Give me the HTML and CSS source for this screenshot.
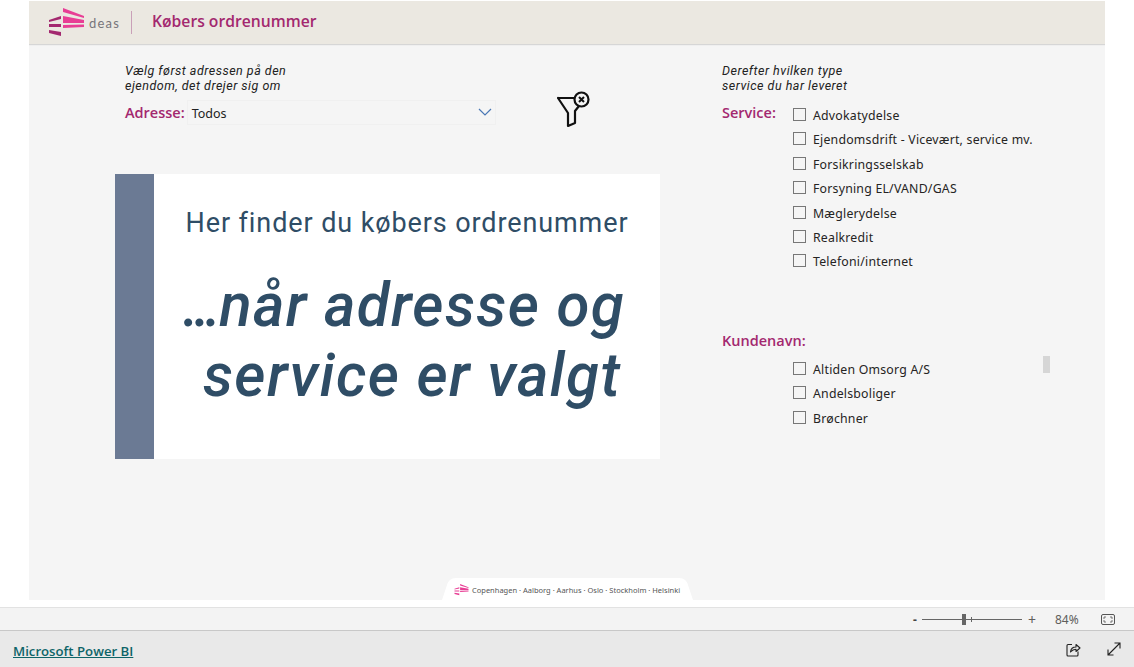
FILE: index.html
```html
<!DOCTYPE html>
<html lang="da">
<head>
<meta charset="utf-8">
<title>Købers ordrenummer</title>
<link rel="stylesheet" href="styles.css">
</head>
<body>
<main class="viewport">
  <section class="canvas">
    <header class="head">
      <svg class="logo" width="35" height="30" viewBox="0 0 35 30">
        <path fill="#e83e95" d="M14 0L35 8V10L14 4z M14 8L35 12V15H14z M14 17L35 16.500V19L14 20z"/>
        <path fill="#a3286f" d="M0 12L12 8V11L0 14z M0 16H12V19H0z M0 22L12 24V28L0 25z"/>
      </svg>
      <span class="brand">deas</span>
      <span class="divider"></span>
      <h1 class="title">Købers ordrenummer</h1>
    </header>
    <div class="body">
      <div class="left">
        <p class="note note-left">Vælg først adressen på den<br>ejendom, det drejer sig om</p>
        <div class="address-row">
          <span class="label">Adresse:</span>
          <div class="select">
            <span class="select-value">Todos</span>
            <svg width="14" height="8" viewBox="0 0 14 8"><path d="M1 1l6 6 6-6" fill="none" stroke="#4a78b5" stroke-width="1.200"/></svg>
          </div>
          <svg class="clear" width="34" height="38" viewBox="0 0 34 38">
            <path d="M1 8H17 M1 8L11 23V36L18 33V21L22 16" fill="none" stroke="#111" stroke-width="2.200" stroke-linejoin="round" stroke-linecap="round"/>
            <circle cx="24.500" cy="9.500" r="7" fill="#f5f5f5" stroke="#111" stroke-width="2.200"/>
            <path d="M22 7l5 5m0-5l-5 5" stroke="#111" stroke-width="2"/>
          </svg>
        </div>
        <div class="banner">
          <div class="stripe"></div>
          <div class="banner-text">
            <p class="b-small">Her finder du købers ordrenummer</p>
            <p class="b-big"><span class="dots">...</span>når adresse og<br>&nbsp;service er valgt</p>
          </div>
        </div>
      </div>
      <div class="right">
        <p class="note">Derefter hvilken type<br>service du har leveret</p>
        <div class="service">
          <span class="label">Service:</span>
          <ul class="checks">
            <li><i class="box"></i>Advokatydelse</li>
            <li><i class="box"></i>Ejendomsdrift - Vicevært, service mv.</li>
            <li><i class="box"></i>Forsikringsselskab</li>
            <li><i class="box"></i>Forsyning EL/VAND/GAS</li>
            <li><i class="box"></i>Mæglerydelse</li>
            <li><i class="box"></i>Realkredit</li>
            <li><i class="box"></i>Telefoni/internet</li>
          </ul>
        </div>
        <span class="label customer">Kundenavn:</span>
        <div class="customer-list">
          <ul class="checks">
            <li><i class="box"></i>Altiden Omsorg A/S</li>
            <li><i class="box"></i>Andelsboliger</li>
            <li><i class="box"></i>Brøchner</li>
          </ul>
          <span class="scroll"></span>
        </div>
      </div>
    </div>
    <div class="tab">
      <svg width="15" height="12" viewBox="0 0 35 30">
        <path fill="#e83e95" d="M14 0L35 8V10L14 4z M14 8L35 12V15H14z M14 17L35 16.500V19L14 20z M0 12L12 8V11L0 14z M0 16H12V19H0z M0 22L12 24V28L0 25z"/>
      </svg>
      <span>Copenhagen · Aalborg · Aarhus · Oslo · Stockholm · Helsinki</span>
    </div>
  </section>
  <div class="zoombar">
    <span class="z-minus">-</span>
    <span class="slider"><i class="thumb"></i><i class="tick"></i></span>
    <span class="z-plus">+</span>
    <span class="z-pct">84%</span>
    <svg width="14" height="11" viewBox="0 0 14 11"><rect x=".5" y=".5" width="13" height="10" rx="1.500" fill="none" stroke="#555"/><path d="M3 5V3H5 M9 3H11V5 M11 6V8H9 M5 8H3V6" fill="none" stroke="#555" stroke-width=".8"/></svg>
  </div>
  <footer class="foot">
    <a class="pbi" href="#">Microsoft Power BI</a>
    <div class="foot-icons">
      <svg width="15" height="15" viewBox="0 0 15 15"><path d="M6 2.500H2a1 1 0 0 0-1 1V13a1 1 0 0 0 1 1h9a1 1 0 0 0 1-1V9.500" fill="none" stroke="#222" stroke-width="1.100"/><path d="M4.500 10c.3-3 2.500-5 5.500-5V2.500L14 6l-4 3.500V7.200c-2 0-4 1-5.500 2.800z" fill="none" stroke="#222" stroke-width="1.100" stroke-linejoin="round"/></svg>
      <svg width="14" height="14" viewBox="0 0 14 14"><path d="M1 13L13 1 M7.500 1H13V6.500 M1 7.500V13H6.500" fill="none" stroke="#222" stroke-width="1.100"/></svg>
    </div>
  </footer>
</main>
</body>
</html>
```
FILE: styles.css
```css
* { box-sizing: border-box; }
html, body { margin: 0; height: 100%; }
body { background: #fff; font-family: "Noto Sans", "Open Sans", sans-serif; overflow: hidden; }
p, h1, ul { margin: 0; padding: 0; }
ul { list-style: none; }

.viewport { width: 1134px; height: 667px; display: flex; flex-direction: column; padding-top: 1px; }

.canvas { position: relative; width: 1076px; height: 599px; margin-left: 29px; background: #f5f5f5; overflow: hidden; }

.head { height: 43px; display: flex; align-items: center; padding-left: 20px; background: #ebe8e1; box-shadow: 0 1px 1px #d6d6d6; }
.logo { flex: none; }
.brand { width: 31px; margin-left: 5px; margin-top: 1px; color: #77757a; font: 13px/16px "Lato", sans-serif; letter-spacing: 1.200px; }
.divider { width: 1px; height: 23px; margin: 0 20px 0 11px; background: #c9a0b8; }
.title { margin-bottom: 4px; color: #a3286f; font: 600 15.700px/22px "Open Sans", sans-serif; }

.body { display: grid; grid-template-columns: 607px 1fr; padding: 19px 0 0 86px; }

.note { color: #222; font: italic 12.500px/15px "Roboto", sans-serif; letter-spacing: .5px; }
.note-left { padding-left: 10px; }
.label { color: #a3286f; font: 600 14.500px/20px "Open Sans", sans-serif; }

.address-row { display: flex; align-items: center; height: 26px; margin-top: 7px; padding-left: 10px; position: relative; }
.select { display: flex; align-items: center; justify-content: space-between; width: 309px; height: 25px; margin: -2px 0 0 2px; padding: 0 3px 0 4px; border: 1px solid #f0f0f0; color: #222; font-size: 12.500px; }
.select-value { margin-top: 2px; }
.clear { position: absolute; left: 442px; top: -10px; }

.banner { display: flex; width: 545px; height: 285px; margin-top: 48px; background: #fff; }
.stripe { width: 39px; background: #6b7a94; }
.banner-text { flex: 1; color: #2f4d66; font-family: "Roboto", sans-serif; text-align: center; }
.b-small { margin-top: 31px; font-size: 27px; line-height: 36px; letter-spacing: .9px; }
.b-big { margin-top: 30px; padding-right: 6px; font-size: 60px; line-height: 70px; font-style: italic; font-weight: 500; letter-spacing: 1.400px; }
.dots { letter-spacing: -5px; margin-right: 3px; }

.service { display: flex; margin-top: 10px; }
.service .label { width: 71px; }
.checks { color: #252423; font-size: 12.300px; letter-spacing: .22px; }
.checks li { display: flex; align-items: center; height: 24.400px; }
.service .checks { margin-top: .3px; }
.box { flex: none; width: 13px; height: 13px; margin-right: 7px; margin-top: -2px; border: 1px solid #777; }

.customer { display: block; margin-top: 57px; }
.customer-list { position: relative; margin-top: 6.300px; padding-left: 71px; }
.scroll { position: absolute; left: 321px; top: -1px; width: 7px; height: 17px; background: #d6d6d6; }

.tab { position: absolute; left: 413px; bottom: 0; display: flex; align-items: center; gap: 3px; width: 251px; height: 22px; padding: 2px 0 0 12px; background: #fff; clip-path: path("M0 22 L5 7 C6 3 9 0 14 0 H237 C242 0 245 3 246 7 L251 22 Z"); color: #555; font-size: 7.500px; white-space: nowrap; }

.zoombar { display: flex; align-items: center; height: 24px; margin-top: 7px; padding-left: 913px; background: #f3f3f3; border-top: 1px solid #e2e2e2; border-bottom: 1px solid #c8c8c8; color: #605e5c; font-size: 12px; }
.z-minus { width: 9px; font-weight: 700; color: #444; }
.slider { position: relative; width: 100px; height: 1px; background: #666; }
.thumb { position: absolute; left: 40px; top: -5px; width: 4px; height: 11px; background: #666; }
.tick { position: absolute; left: 49px; top: -2px; width: 1px; height: 5px; background: #666; }
.z-plus { margin-left: 6px; width: 27px; font-size: 14px; }
.z-pct { width: 46px; }

.foot { display: flex; align-items: center; justify-content: space-between; flex: 1; padding: 0 13px; background: #e9e9e9; }
.pbi { margin-top: 4px; color: #0e6468; font-size: 13.200px; font-weight: 600; font-family: "Open Sans", sans-serif; }
.foot-icons { display: flex; gap: 26px; margin-top: 1px; }
```
